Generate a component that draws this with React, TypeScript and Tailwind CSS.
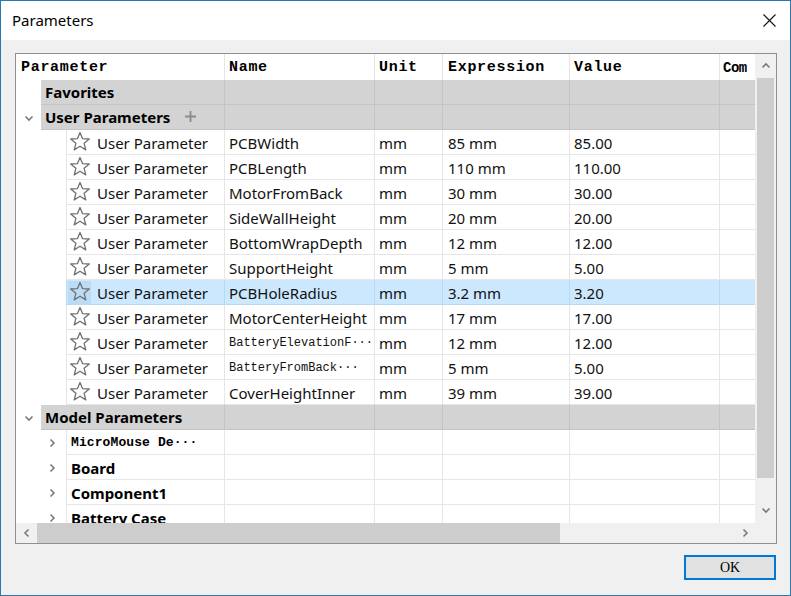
import React from 'react'

const ui = { fontFamily: '"Noto Sans", "Open Sans", sans-serif' }
const mono = { fontFamily: '"Liberation Mono", "DejaVu Sans Mono", monospace' }

type Param = { name: string; expr: string; value: string; monoName?: boolean }

const params: Param[] = [
  { name: 'PCBWidth', expr: '85 mm', value: '85.00' },
  { name: 'PCBLength', expr: '110 mm', value: '110.00' },
  { name: 'MotorFromBack', expr: '30 mm', value: '30.00' },
  { name: 'SideWallHeight', expr: '20 mm', value: '20.00' },
  { name: 'BottomWrapDepth', expr: '12 mm', value: '12.00' },
  { name: 'SupportHeight', expr: '5 mm', value: '5.00' },
  { name: 'PCBHoleRadius', expr: '3.2 mm', value: '3.20' },
  { name: 'MotorCenterHeight', expr: '17 mm', value: '17.00' },
  { name: 'BatteryElevationF\u00b7\u00b7\u00b7', expr: '12 mm', value: '12.00', monoName: true },
  { name: 'BatteryFromBack\u00b7\u00b7\u00b7', expr: '5 mm', value: '5.00', monoName: true },
  { name: 'CoverHeightInner', expr: '39 mm', value: '39.00' },
]

const models = [
  { name: 'MicroMouse De\u00b7\u00b7\u00b7', mono: true },
  { name: 'Board' },
  { name: 'Component1' },
  { name: 'Battery Case' },
]

function Star() {
  return (
    <svg width="22" height="22" viewBox="0 0 22 22">
      <polygon
        points="11,1.5 13.5,7.6 20.3,8 15.1,12.3 16.8,18.9 11,15.2 5.2,18.9 6.9,12.3 1.7,8 8.5,7.6"
        fill="none"
        stroke="#707070"
        strokeWidth="1.3"
        strokeLinejoin="round"
      />
    </svg>
  )
}

function Chevron({ dir }: { dir: 'down' | 'right' | 'up' | 'left' }) {
  const d = {
    down: 'M1.5 3.5 L5 7 L8.5 3.5',
    up: 'M1.5 6.5 L5 3 L8.5 6.5',
    right: 'M3.5 1.5 L7 5 L3.5 8.5',
    left: 'M6.5 1.5 L3 5 L6.5 8.5',
  }[dir]
  return (
    <svg width="10" height="10" viewBox="0 0 10 10">
      <path d={d} fill="none" stroke="#7a7a7a" strokeWidth="1.6" />
    </svg>
  )
}

function GroupRow({ label, chevron, plus }: { label: string; chevron?: boolean; plus?: boolean }) {
  return (
    <div className="flex h-[25px] shrink-0">
      <div className="flex w-[25px] items-center justify-center bg-white pl-[1px] pt-[1px]">
        {chevron && <Chevron dir="down" />}
      </div>
      <div className="flex w-[184px] items-center gap-[14px] border-r border-b border-[#c4c4c4] bg-[#d3d3d3] pl-[4px] pt-[1px]">
        <span className="text-[15px] font-bold text-black" style={ui}>{label}</span>
        {plus && (
          <svg width="13" height="13" viewBox="0 0 13 13" className="-mt-[3px]">
            <path d="M6.5 1 V12 M1 6.5 H12" stroke="#8a8a8a" strokeWidth="1.8" />
          </svg>
        )}
      </div>
      <div className="w-[150px] border-r border-b border-[#c4c4c4] bg-[#d3d3d3]" />
      <div className="w-[68px] border-r border-b border-[#c4c4c4] bg-[#d3d3d3]" />
      <div className="w-[127px] border-r border-b border-[#c4c4c4] bg-[#d3d3d3]" />
      <div className="w-[150px] border-r border-b border-[#c4c4c4] bg-[#d3d3d3]" />
      <div className="w-[35px] border-b border-[#c4c4c4] bg-[#d3d3d3]" />
    </div>
  )
}

function ParamRow({ p, selected }: { p: Param; selected?: boolean }) {
  const bg = selected ? 'bg-[#cce8ff]' : 'bg-white'
  const line = selected ? 'border-[#b8d9f3]' : 'border-[#e6e6e6]'
  const text = 'text-[15px] text-[#111] leading-none pt-[2px]'
  return (
    <div className="flex h-[25px] shrink-0">
      <div className="w-[50px] bg-white" />
      <div className={`flex w-[159px] items-center border-x border-b ${line} ${bg} pl-[1px]`}>
        <div className={`flex h-[23px] w-[23px] items-center justify-center ${selected ? 'bg-[#bcdcf6]' : ''}`}>
          <Star />
        </div>
        <span className={`ml-[6px] ${text}`} style={ui}>User Parameter</span>
      </div>
      <div className={`flex w-[150px] items-center border-r border-b ${line} ${bg} pl-[4px]`}>
        {p.monoName ? (
          <span className="pt-[1px] text-[12px] font-medium text-[#111]" style={mono}>{p.name}</span>
        ) : (
          <span className={text} style={ui}>{p.name}</span>
        )}
      </div>
      <div className={`flex w-[68px] items-center border-r border-b ${line} ${bg} pl-[4px]`}>
        <span className={text} style={ui}>mm</span>
      </div>
      <div className={`flex w-[127px] items-center border-r border-b ${line} ${bg} pl-[5px]`}>
        <span className={text} style={ui}>{p.expr}</span>
      </div>
      <div className={`flex w-[150px] items-center border-r border-b ${line} ${bg} pl-[4px]`}>
        <span className={text} style={ui}>{p.value}</span>
      </div>
      <div className={`w-[35px] border-b ${line} ${bg}`} />
    </div>
  )
}

function ModelRow({ name, isMono }: { name: string; isMono?: boolean }) {
  return (
    <div className="flex h-[25px] shrink-0">
      <div className="flex w-[50px] items-center justify-end bg-white pr-[9px]">
        <Chevron dir="right" />
      </div>
      <div className="flex w-[159px] items-center border-x border-b border-[#e6e6e6] bg-white pl-[4px]">
        {isMono ? (
          <span className="pt-[1px] text-[13px] font-bold tracking-[0.1px] text-black" style={mono}>{name}</span>
        ) : (
          <span className="pt-[2px] text-[15px] font-bold leading-none text-black" style={ui}>{name}</span>
        )}
      </div>
      <div className="w-[150px] border-r border-b border-[#e6e6e6] bg-white" />
      <div className="w-[68px] border-r border-b border-[#e6e6e6] bg-white" />
      <div className="w-[127px] border-r border-b border-[#e6e6e6] bg-white" />
      <div className="w-[150px] border-r border-b border-[#e6e6e6] bg-white" />
      <div className="w-[35px] border-b border-[#e6e6e6] bg-white" />
    </div>
  )
}

export default function App() {
  const head = 'text-[15px] font-bold tracking-[0.7px] text-black'
  return (
    <div className="flex h-[596px] w-[791px] flex-col border border-[#2a78ad] bg-[#f0f0f0]">
      {/* title bar */}
      <div className="flex h-[39px] shrink-0 items-center justify-between bg-white pl-[11px] pr-[14px]">
        <span className="text-[15px] text-black" style={ui}>Parameters</span>
        <svg width="13" height="13" viewBox="0 0 13 13">
          <path d="M0.5 0.5 L12.5 12.5 M12.5 0.5 L0.5 12.5" stroke="#111" strokeWidth="1.1" />
        </svg>
      </div>

      <div className="flex flex-1 flex-col px-[14px] pt-[13px]">
        <div className="flex h-[491px] w-[762px] flex-col border border-[#8d9097] bg-white">
          <div className="flex h-[469px]">
            <div className="flex w-[739px] flex-col overflow-hidden">
              {/* header */}
              <div className="flex h-[26px] shrink-0 items-center bg-white" style={mono}>
                <div className="flex h-full w-[209px] items-center border-r border-[#e5e5e5] pl-[5px] pt-[3px]"><span className={head}>Parameter</span></div>
                <div className="flex h-full w-[150px] items-center border-r border-[#e5e5e5] pl-[4px] pt-[3px]"><span className={head}>Name</span></div>
                <div className="flex h-full w-[68px] items-center border-r border-[#e5e5e5] pl-[4px] pt-[3px]"><span className={head}>Unit</span></div>
                <div className="flex h-full w-[127px] items-center border-r border-[#e5e5e5] pl-[5px] pt-[3px]"><span className={head}>Expression</span></div>
                <div className="flex h-full w-[150px] items-center border-r border-[#e5e5e5] pl-[4px] pt-[3px]"><span className={head}>Value</span></div>
                <div className="flex h-full w-[35px] items-center pl-[3px] pt-[3px]"><span className="text-[14px] font-bold tracking-[-0.5px] text-black">Com</span></div>
              </div>

              <GroupRow label="Favorites" />
              <GroupRow label="User Parameters" chevron plus />
              {params.map((p, i) => (
                <ParamRow key={p.name} p={p} selected={i === 6} />
              ))}
              <GroupRow label="Model Parameters" chevron />
              {models.map(m => (
                <ModelRow key={m.name} name={m.name} isMono={m.mono} />
              ))}
            </div>

            {/* vertical scrollbar */}
            <div className="flex w-[21px] flex-col items-center bg-[#f0f0f0]">
              <div className="flex h-[24px] items-center justify-center"><Chevron dir="up" /></div>
              <div className="h-[400px] w-[17px] bg-[#cdcdcd]" />
              <div className="flex-1" />
              <div className="flex h-[24px] items-center justify-center pb-[2px]"><Chevron dir="down" /></div>
            </div>
          </div>

          {/* horizontal scrollbar */}
          <div className="flex h-[20px]">
            <div className="flex w-[21px] items-center justify-center bg-[#f0f0f0]"><Chevron dir="left" /></div>
            <div className="w-[523px] bg-[#cdcdcd]" />
            <div className="flex flex-1 items-center justify-end bg-[#f0f0f0] pr-[5px]"><Chevron dir="right" /></div>
            <div className="w-[21px] bg-[#f0f0f0]" />
          </div>
        </div>

        <div className="mt-[11px] flex justify-end">
          <button
            className="flex h-[25px] w-[92px] items-center justify-center border-2 border-[#0078d7] bg-[#e1e1e1] text-[14px] text-black"
            style={{ fontFamily: '"Liberation Serif", "DejaVu Serif", serif' }}
          >
            OK
          </button>
        </div>
      </div>
    </div>
  )
}
